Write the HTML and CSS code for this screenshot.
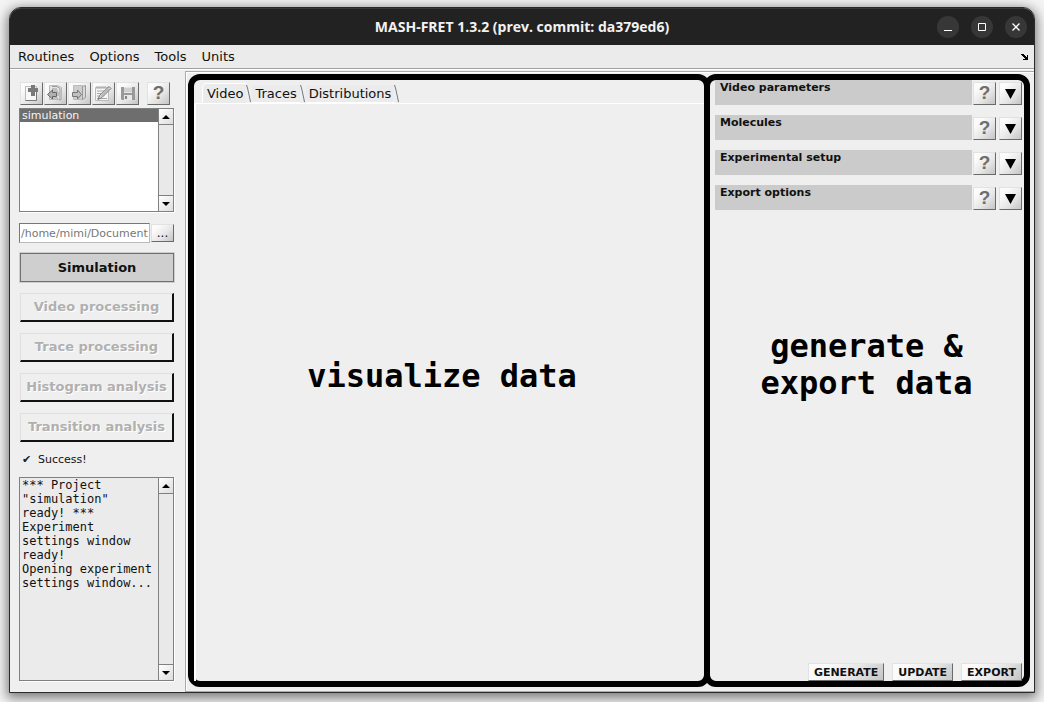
FILE: index.html
```html
<!DOCTYPE html>
<html lang="en">
<head>
<meta charset="utf-8">
<title>MASH-FRET</title>
<link rel="stylesheet" href="styles.css">
</head>
<body>
<div class="window">
  <header class="titlebar">
    <h1 class="title">MASH-FRET 1.3.2 (prev. commit: da379ed6)</h1>
    <div class="wincontrols">
      <button class="winbtn" aria-label="Minimize"><svg width="22" height="22" viewBox="0 0 22 22"><path d="M7 14.5h8" stroke="#fff" fill="none"/></svg></button>
      <button class="winbtn" aria-label="Maximize"><svg width="22" height="22" viewBox="0 0 22 22"><path d="M7.5 7.500h7v7h-7z" stroke="#fff" fill="none"/></svg></button>
      <button class="winbtn" aria-label="Close"><svg width="22" height="22" viewBox="0 0 22 22"><path d="M7.500 7.500l7 7M14.500 7.500l-7 7" stroke="#fff" stroke-width="1.300" fill="none"/></svg></button>
    </div>
  </header>
  <nav class="menubar">
    <button class="menu">Routines</button>
    <button class="menu">Options</button>
    <button class="menu">Tools</button>
    <button class="menu">Units</button>
    <button class="dock" aria-label="Dock"><svg width="7" height="6" viewBox="0 0 7 6" shape-rendering="crispEdges"><path d="M0 0h3v1h1v1h1v1h1v-2h1v5h-5v-1h2v-1h-1v-1h-1v-1h-1v-1h-1z" fill="#000"/></svg></button>
  </nav>
  <div class="content">
    <aside class="sidebar">
      <div class="toolbar">
        <button class="btn tool" aria-label="New project"><svg width="19" height="19" viewBox="0 0 19 19"><path d="M3.500 2.500h11v14h-11z" fill="#f8f8f8" stroke="#bbb"/><path d="M14.500 6v10.500h-11" fill="none" stroke="#777"/><path d="M9 1h4v3h3v4h-3v4h-4v-4h-3v-4h3z" fill="#7a7a7a"/></svg></button>
        <button class="btn tool" aria-label="Open project"><svg width="19" height="19" viewBox="0 0 19 19"><path d="M3.500 1.500h8l4 2v12h-12z" fill="#e4e4e4" stroke="#bbb"/><path d="M6 2.500h5l3 2v12M6 5h5M7 7h5M10 9h3M10 11h3M7 14h5" fill="none" stroke="#999"/><path d="M1.500 10.500l5-4.500v2.500h4v4h-4v2.500z" fill="#b0b0b0" stroke="#666"/></svg></button>
        <button class="btn tool" aria-label="Close project"><svg width="19" height="19" viewBox="0 0 19 19"><path d="M3.500 1.500h9v14h-9z" fill="#cecece" stroke="#bbb"/><path d="M12.500 2.500l3-1v12l-3 2z" fill="#d8d8d8" stroke="#999"/><path d="M2.500 8.500h5v-2.500l4 4.500-4 4.500v-2.500h-5z" fill="#c0c0c0" stroke="#777"/></svg></button>
        <button class="btn tool" aria-label="Edit project"><svg width="19" height="19" viewBox="0 0 19 19"><path d="M1.500 3.500h13v13h-13z" fill="#f5f5f5" stroke="#bbb"/><path d="M3 2v3M5 2v3M7 2v3M9 2v3M11 2v3M3 7h9M3 9.500h7M3 12h4M3 14.500h10" stroke="#aaa"/><path d="M15 2.500l2 2-9 9-4 2 1.500-4z" fill="#ddd" stroke="#777"/><path d="M15 4.500l-8 8" stroke="#999"/></svg></button>
        <button class="btn tool" aria-label="Save project"><svg width="19" height="19" viewBox="0 0 19 19"><path d="M3 3h14v13h-13l-1-1z" fill="#999"/><path d="M6 3h8v6h-8z" fill="#e4e4e4"/><path d="M6 11h8v5h-8z" fill="#e8e8e8"/><path d="M7 12h2v3h-2z" fill="#858585"/><path d="M6 5h8M6 7h8" stroke="#bbb"/></svg></button>
        <button class="btn tool help" aria-label="Help">?</button>
      </div>
      <div class="listbox projects">
        <select class="projectlist" size="6" aria-label="Projects"><option selected>simulation</option></select>
        <div class="scroll">
          <button class="arrow" aria-label="Scroll projects up"><svg width="8" height="4" viewBox="0 0 8 4"><path d="M4 0l4 4H0z"/></svg></button>
          <button class="arrow" aria-label="Scroll projects down"><svg width="8" height="4" viewBox="0 0 8 4"><path d="M0 0h8l-4 4z"/></svg></button>
        </div>
      </div>
      <div class="pathrow">
        <input class="path" type="text" value="/home/mimi/Documents" aria-label="Project folder">
        <button class="btn browse" aria-label="Browse">...</button>
      </div>
      <div class="modules">
        <button class="module current">Simulation</button>
        <button class="module" disabled>Video processing</button>
        <button class="module" disabled>Trace processing</button>
        <button class="module" disabled>Histogram analysis</button>
        <button class="module" disabled>Transition analysis</button>
      </div>
      <p class="status"><span class="tick">✔</span>Success!</p>
      <div class="listbox logbox">
        <textarea class="log" readonly aria-label="Action log">*** Project
"simulation"
ready! ***
Experiment
settings window
ready!
Opening experiment
settings window...</textarea>
        <div class="scroll">
          <button class="arrow" aria-label="Scroll log up"><svg width="8" height="4" viewBox="0 0 8 4"><path d="M4 0l4 4H0z"/></svg></button>
          <button class="arrow" aria-label="Scroll log down"><svg width="8" height="4" viewBox="0 0 8 4"><path d="M0 0h8l-4 4z"/></svg></button>
        </div>
      </div>
    </aside>
    <main class="workspace">
      <section class="pane visual">
        <div class="tabs" role="tablist">
          <button class="tab active" role="tab" aria-selected="true">Video</button>
          <svg class="tabedge" width="6" height="18" viewBox="0 0 6 18"><path d="M.5 0l1 3 2 9 1 5" fill="none" stroke="#777"/></svg>
          <button class="tab" role="tab">Traces</button>
          <svg class="tabedge" width="6" height="18" viewBox="0 0 6 18"><path d="M.5 0l1 3 2 9 1 5" fill="none" stroke="#777"/></svg>
          <button class="tab" role="tab">Distributions</button>
          <svg class="tabedge" width="6" height="18" viewBox="0 0 6 18"><path d="M.5 0l1 3 2 9 1 5" fill="none" stroke="#777"/></svg>
        </div>
        <div class="canvas"><p class="caption">visualize data</p></div>
      </section>
      <section class="pane control">
        <div class="panels">
          <div class="panel"><h2 class="heading">Video parameters</h2><button class="btn tool help" aria-label="Help on video parameters">?</button><button class="btn tool" aria-label="Expand video parameters"><svg width="11" height="10" viewBox="0 0 11 10"><path d="M0 0h11L5.500 10z"/></svg></button></div>
          <div class="panel"><h2 class="heading">Molecules</h2><button class="btn tool help" aria-label="Help on molecules">?</button><button class="btn tool" aria-label="Expand molecules"><svg width="11" height="10" viewBox="0 0 11 10"><path d="M0 0h11L5.500 10z"/></svg></button></div>
          <div class="panel"><h2 class="heading">Experimental setup</h2><button class="btn tool help" aria-label="Help on experimental setup">?</button><button class="btn tool" aria-label="Expand experimental setup"><svg width="11" height="10" viewBox="0 0 11 10"><path d="M0 0h11L5.500 10z"/></svg></button></div>
          <div class="panel"><h2 class="heading">Export options</h2><button class="btn tool help" aria-label="Help on export options">?</button><button class="btn tool" aria-label="Expand export options"><svg width="11" height="10" viewBox="0 0 11 10"><path d="M0 0h11L5.500 10z"/></svg></button></div>
        </div>
        <p class="caption side">generate &amp;<br>export data</p>
        <div class="actions">
          <button class="btn action">GENERATE</button>
          <button class="btn action">UPDATE</button>
          <button class="btn action">EXPORT</button>
        </div>
      </section>
    </main>
  </div>
</div>
</body>
</html>
```
FILE: styles.css
```css
* { box-sizing: border-box; }
html { height: 100%; }
body {
  height: 100%;
  margin: 0;
  padding: 7px 9px 9px;
  background: #f4f4f4;
  font: 11px "DejaVu Sans", sans-serif;
  color: #111;
}
h1, h2, p { margin: 0; }
button, input, textarea, select { font: inherit; color: inherit; margin: 0; border-radius: 0; outline: none; }
button { display: block; padding: 0; border: 0; background: none; white-space: nowrap; }
svg { display: block; }

.window {
  display: flex;
  flex-direction: column;
  height: 100%;
  border: 1px solid #2b2b2b;
  border-radius: 12px 12px 0 0;
  background: #efefef;
  box-shadow: 0 3px 12px 2px rgba(0, 0, 0, .5);
}
.titlebar {
  display: grid;
  grid-template-columns: 1fr auto 1fr;
  align-items: center;
  height: 37px;
  flex: none;
  padding: 0 7px;
  border-top: 1px solid #383838;
  border-radius: 11px 11px 0 0;
  background: #222;
}
.title { grid-column: 2; font: bold 14px/22px "Open Sans", sans-serif; color: #f2f2f2; }
.wincontrols { display: flex; gap: 12px; justify-content: flex-end; }
.winbtn { border-radius: 50%; background: #373737; }
.menubar {
  display: flex;
  align-items: center;
  gap: 15px;
  height: 24px;
  flex: none;
  padding: 0 6px 0 8px;
  border-bottom: 1px solid #a0a0a0;
  background: #ebebeb;
  font-size: 13px;
}
.dock { margin-left: auto; }

.content { display: flex; flex: 1; min-height: 0; border-top: 1px solid #fff; }
.sidebar {
  display: flex;
  flex-direction: column;
  width: 175px;
  flex: none;
  padding: 12px 11px 11px 9px;
}
.btn {
  border: 1px solid;
  border-color: #e2e2e2 #6a6a6a #6a6a6a #e2e2e2;
  background: linear-gradient(135deg, #fbfbfb 20%, #e6e6e6 60%, #c4c4c4);
}
.tool { display: grid; place-items: center; width: 23px; height: 23px; flex: none; }
.help { font: bold 19px/18px "Liberation Sans", sans-serif; color: #6e6e6e; padding-bottom: 2px; }
.toolbar { display: flex; gap: 1px; padding-left: 1px; }
.toolbar .help { margin-left: 7px; }

.listbox {
  display: flex;
  border: 1px solid #808080;
  background: #fff;
  box-shadow: 1px 1px #fff;
}
.projects { height: 104px; margin-top: 3px; }
.projectlist { flex: 1; min-width: 0; height: 100%; border: 0; padding: 0; overflow: hidden; background: #fff; }
.projectlist option { min-height: 13px; padding: 0 2px; line-height: 13px; }
.projectlist option:checked {
  background: #6e6e6e linear-gradient(#6e6e6e, #6e6e6e);
  -webkit-text-fill-color: #f4f4f4;
}
.scroll {
  display: flex;
  flex-direction: column;
  justify-content: space-between;
  width: 15px;
  flex: none;
  border-left: 1px solid #808080;
  background: #e9e9e9;
}
.arrow {
  display: grid;
  place-items: center;
  height: 16px;
  border-bottom: 1px solid #808080;
  background: linear-gradient(135deg, #fff, #ddd);
}
.arrow:last-child { border-top: 1px solid #808080; border-bottom: 0; }
.pathrow { display: flex; align-items: center; gap: 1px; margin-top: 11px; }
.path {
  flex: 1;
  min-width: 0;
  height: 20px;
  padding: 0 1px;
  border: 1px solid;
  border-color: #777 #bbb #bbb #777;
  background: #fff;
  color: #777;
}
.browse { width: 23px; height: 18px; font-size: 12px; line-height: 16px; }

.modules { display: flex; flex-direction: column; gap: 11px; margin-top: 10px; padding-left: 1px; }
.module {
  height: 29px;
  padding-bottom: 2px;
  border: solid;
  border-width: 1px 2px 2px 1px;
  border-color: #dfdfdf #111 #111 #dfdfdf;
  font-size: 13px;
  font-weight: bold;
}
.module:disabled { color: #b0b0b0; text-shadow: 1px 1px #fff; }
.module.current { padding: 0; border: 1px solid #6e6e6e; background: #cfcfcf; box-shadow: 0 0 0 1px #cfcfcf; }
.status { display: flex; gap: 5px; margin-top: 11px; padding-left: 3px; line-height: 13px; }
.tick { width: 11px; color: #222; }
.logbox { flex: 1; min-height: 0; margin-top: 11px; background: #ebebeb; }
.log {
  flex: 1;
  min-width: 0;
  padding: 0 2px;
  border: 0;
  resize: none;
  overflow: hidden;
  background: transparent;
  font: 12px/14px "DejaVu Sans Mono", monospace;
}

.workspace {
  display: grid;
  grid-template-columns: 522fr 320fr;
  flex: 1;
  min-width: 0;
  margin-top: 1px;
  padding: 2px 4px 4px 2px;
  border-top: 1px solid #aaa;
  border-left: 1px solid #aaa;
  border-bottom: 1px solid #aaa;
  box-shadow: inset 1px 1px #fff;
}
.pane {
  display: flex;
  flex-direction: column;
  border: 6px solid #000;
  border-radius: 12px;
  min-width: 0;
}
.control { margin-left: -6px; padding: 0 2px 0 5px; }
.tabs { display: flex; align-items: flex-end; height: 23px; padding-left: 8px; font-size: 13px; }
.tab { height: 18px; padding: 0 3px; border-bottom: 1px solid #fff; background: #ebebeb; }
.tab.active {
  height: 20px;
  padding: 0 3px 1px 4px;
  border: solid #fff;
  border-width: 1px 0 0 1px;
  border-radius: 5px 0 0 0;
}
.canvas {
  display: grid;
  place-items: center;
  flex: 1;
  padding: 0 16px 32px 0;
  border-top: 1px solid #fff;
  border-left: 2px solid #fff;
}
.caption { font: bold 32px/37px "DejaVu Sans Mono", monospace; color: #000; text-align: center; }
.panels { display: grid; gap: 10px; }
.panel { display: flex; align-items: flex-end; gap: 3px; height: 25px; }
.panel .help { margin-left: -2px; }
.heading { flex: 1; align-self: stretch; padding-left: 5px; background: #cbcbcb; font-size: 11px; line-height: 16px; }
.side { margin: auto 0; padding: 0 4px 144px 0; }
.actions { display: flex; justify-content: flex-end; gap: 8px; }
.action { height: 18px; padding: 0 5px; font-size: 11px; font-weight: bold; }
```
